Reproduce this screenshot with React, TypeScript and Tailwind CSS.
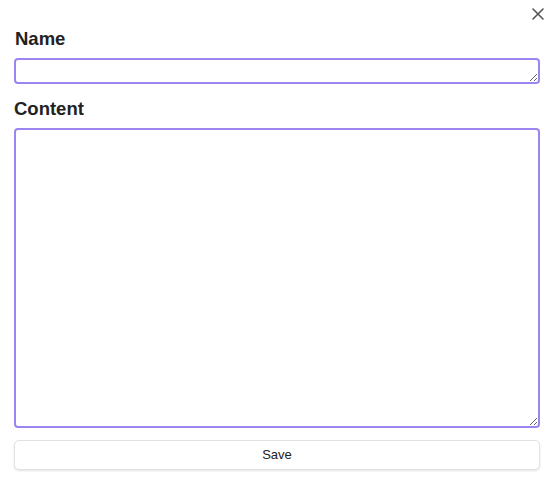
import React from "react";

export default function App() {
  return (
    <div className="w-[551px] h-[482px] bg-white relative" style={{ fontFamily: '"Liberation Sans", Arial, sans-serif' }}>
      <button className="absolute right-[3px] top-[4px] w-[20px] h-[20px] flex items-center justify-center text-[#555]">
        <svg width="12" height="12" viewBox="0 0 12 12" fill="none" stroke="currentColor" strokeWidth="1.6" strokeLinecap="round">
          <path d="M1 1L11 11M11 1L1 11" />
        </svg>
      </button>
      <div className="flex flex-col pl-[14px] pr-[11px] pt-[28px]">
        <label className="text-[18.5px] font-bold text-[#222] leading-[22px] pl-[1px]">Name</label>
        <textarea className="mt-[8px] h-[26px] w-full border-2 border-[#9d85ef] rounded-[4px] outline-none" />
        <label className="mt-[14px] text-[18.5px] font-bold text-[#222] leading-[22px]">Content</label>
        <textarea className="mt-[8px] h-[300px] w-full border-2 border-[#9d85ef] rounded-[4px] outline-none" />
        <button className="mt-[12px] h-[30px] w-full border border-[#e2e2e2] rounded-[5px] bg-white shadow-[0_1px_2px_rgba(0,0,0,0.12)] text-[13px] text-[#222]">
          Save
        </button>
      </div>
    </div>
  );
}
